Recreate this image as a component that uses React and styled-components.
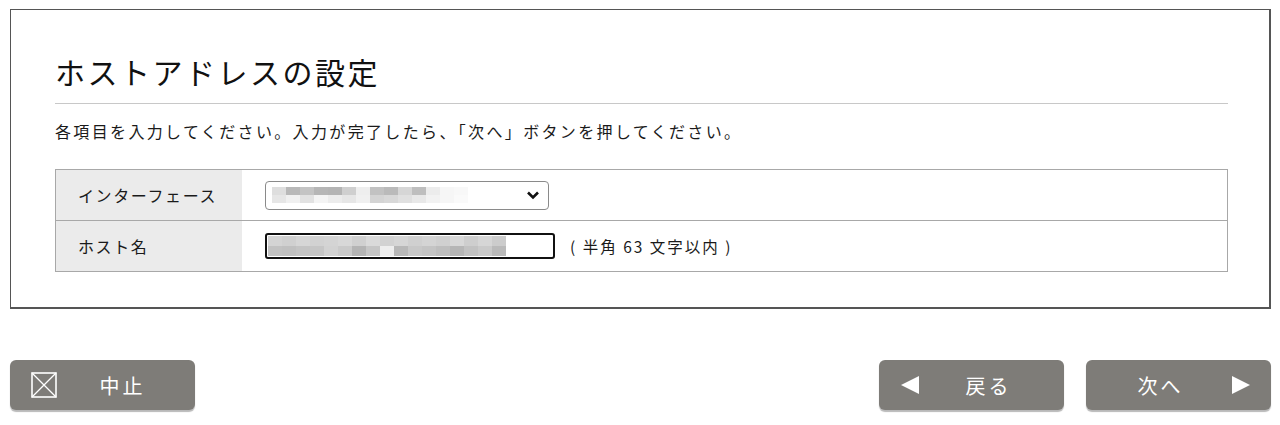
import React from 'react';
import styled, { createGlobalStyle } from 'styled-components';

const GlobalStyle = createGlobalStyle`
  body {
    margin: 0;
    background: #ffffff;
    font-family: "Noto Sans CJK JP", "Noto Sans", sans-serif;
    color: #1a1a1a;
  }
`;

const Page = styled.div`
  width: 1280px;
  height: 425px;
  padding: 9px 9px 0 10px;
  box-sizing: border-box;
`;

const Panel = styled.section`
  border: 1px solid #555;
  border-width: 1px 2px 2px 1px;
  padding: 41px 41px 36px 44px;
  height: 300px;
  box-sizing: border-box;
`;

const Title = styled.h1`
  margin: 0;
  font-size: 30px;
  font-weight: 400;
  letter-spacing: 2.5px;
  line-height: 40px;
  padding-bottom: 12px;
  border-bottom: 1px solid #c8c8c8;
  color: #111;
`;

const Lead = styled.p`
  margin: 16px 0 0;
  font-size: 16px;
  letter-spacing: 2.35px;
  line-height: 22px;
`;

const Table = styled.div`
  margin-top: 27px;
  border: 1px solid #a8a8a8;
  display: grid;
  grid-template-columns: 186px 1fr;
`;

const Label = styled.div`
  background: #ebebeb;
  height: 50px;
  display: flex;
  align-items: center;
  padding-left: 22px;
  font-size: 16px;
  letter-spacing: 1.6px;
  border-top: ${p => (p.$first ? 'none' : '1px solid #a8a8a8')};
`;

const Cell = styled.div`
  height: 50px;
  display: flex;
  align-items: center;
  padding-left: 23px;
  gap: 15px;
  border-top: ${p => (p.$first ? 'none' : '1px solid #a8a8a8')};
`;

const SelectBox = styled.div`
  width: 284px;
  height: 29px;
  box-sizing: border-box;
  border: 1px solid #8a8a8a;
  border-radius: 4px;
  display: flex;
  align-items: center;
  justify-content: space-between;
  padding: 0 8px 0 6px;
  background: #fff;
`;

const InputBox = styled.div`
  width: 290px;
  height: 26px;
  box-sizing: border-box;
  border: 2px solid #111;
  border-radius: 3px;
  display: flex;
  align-items: stretch;
  padding: 1px;
  background: #fff;
`;

const Mosaic = styled.div`
  display: grid;
  grid-template-columns: repeat(${p => p.$cols}, ${p => p.$w}px);
  grid-auto-rows: ${p => p.$h}px;
  align-content: center;
`;

const Px = styled.span`
  background: ${p => p.$c};
`;

const Hint = styled.span`
  font-size: 15.5px;
  letter-spacing: 2px;
`;

const Chevron = styled.svg`
  width: 14px;
  height: 14px;
`;

const ButtonRow = styled.div`
  margin-top: 51px;
  display: flex;
  align-items: center;
  gap: 22px;
`;

const Spacer = styled.div`
  flex: 1;
`;

const Button = styled.button`
  width: 185px;
  height: 50px;
  border: none;
  border-radius: 6px;
  background: #7e7c78;
  box-shadow: 0 2px 1px #b9b9b9;
  color: #fff;
  font-family: "Noto Sans CJK JP", "Noto Sans", sans-serif;
  font-size: 20px;
  letter-spacing: 3px;
  position: relative;
  display: flex;
  align-items: center;
  justify-content: center;
  padding: ${p => p.$pad};
  box-sizing: border-box;
  cursor: pointer;
`;

const ButtonIcon = styled.svg`
  position: absolute;
  top: 50%;
  transform: translateY(-50%);
  ${p => (p.$side === 'left' ? `left: ${p.$off}px;` : `right: ${p.$off}px;`)}
`;

const selGrays = [
  ['#dedede', '#b8b8b8', '#c4c4c4', '#b6b6b6', '#b4b4b4', '#cfcfcf', '#eeeeee', '#c2c2c2', '#bababa', '#d6d6d6', '#bebebe', '#ececec', '#f6f6f6', '#f8f8f8'],
  ['#e6e6e6', '#f0f0f0', '#e2e2e2', '#f4f4f4', '#ececec', '#e6e6e6', '#f0f0f0', '#d4d4d4', '#d8d8d8', '#e0e0e0', '#e8e8e8', '#f2f2f2', '#f6f6f6', '#fafafa'],
];

const inGrays = [
  ['#d4d4d4', '#d0d0d0', '#d6d6d6', '#d2d2d2', '#d4d4d4', '#d8d8d8', '#d0d0d0', '#dadada', '#d2d2d2', '#d6d6d6', '#d0d0d0', '#d4d4d4', '#d0d0d0', '#d8d8d8', '#cecece', '#d6d6d6', '#cccccc'],
  ['#c2c2c2', '#c0c0c0', '#c4c4c4', '#c6c6c6', '#d2d2d2', '#cacaca', '#b4b4b4', '#c6c6c6', '#eeeeee', '#b8b8b8', '#c8c8c8', '#c4c4c4', '#bebebe', '#b6b6b6', '#c2c2c2', '#cacaca', '#bababa'],
];

function Blur({ rows, w, h }) {
  return (
    <Mosaic $cols={rows[0].length} $w={w} $h={h}>
      {rows.flat().map((c, i) => (
        <Px key={i} $c={c} />
      ))}
    </Mosaic>
  );
}

export default function App() {
  return (
    <Page>
      <GlobalStyle />
      <Panel>
        <Title>ホストアドレスの設定</Title>
        <Lead>各項目を入力してください。入力が完了したら、「次へ」ボタンを押してください。</Lead>
        <Table>
          <Label $first>インターフェース</Label>
          <Cell $first>
            <SelectBox>
              <Blur rows={selGrays} w={14} h={8} />
              <Chevron viewBox="0 0 14 14">
                <path d="M2 4.5 L7 9.5 L12 4.5" fill="none" stroke="#111" strokeWidth="2.6" />
              </Chevron>
            </SelectBox>
          </Cell>
          <Label>ホスト名</Label>
          <Cell>
            <InputBox>
              <Blur rows={inGrays} w={14} h={10} />
            </InputBox>
            <Hint>( 半角 63 文字以内 )</Hint>
          </Cell>
        </Table>
      </Panel>
      <ButtonRow>
        <Button $pad="0 0 0 40px">
          <ButtonIcon $side="left" $off={21} width="26" height="26" viewBox="0 0 26 26">
            <rect x="1" y="1" width="24" height="24" fill="none" stroke="#fff" strokeWidth="1.6" />
            <path d="M1 1 L25 25 M25 1 L1 25" stroke="#fff" strokeWidth="1.3" />
          </ButtonIcon>
          中止
        </Button>
        <Spacer />
        <Button $pad="0 0 0 34px">
          <ButtonIcon $side="left" $off={21} width="20" height="20" viewBox="0 0 20 20">
            <path d="M1 10 L19 1 L19 19 Z" fill="#fff" />
          </ButtonIcon>
          戻る
        </Button>
        <Button $pad="0 36px 0 0">
          <ButtonIcon $side="right" $off={20} width="20" height="20" viewBox="0 0 20 20">
            <path d="M19 10 L1 1 L1 19 Z" fill="#fff" />
          </ButtonIcon>
          次へ
        </Button>
      </ButtonRow>
    </Page>
  );
}
